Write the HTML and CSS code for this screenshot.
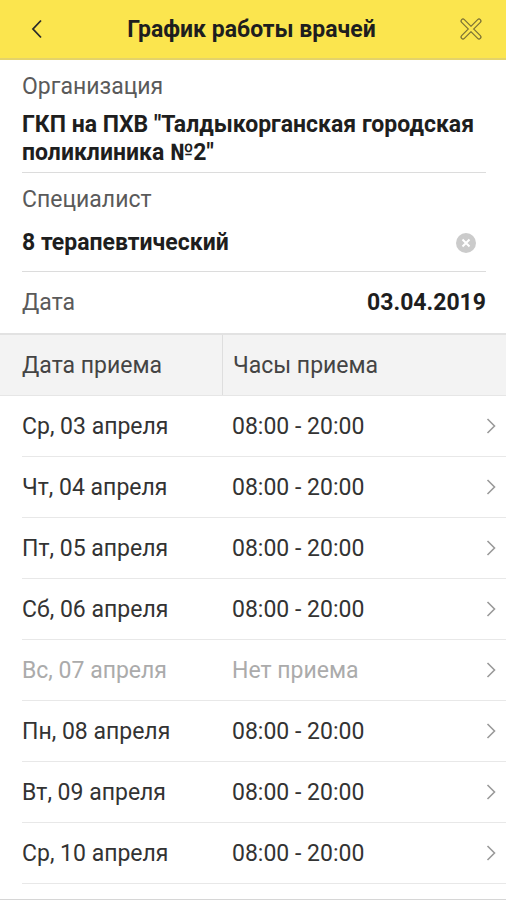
FILE: index.html
```html
<!DOCTYPE html>
<html>
<head>
  <meta charset="UTF-8">
  <title>График работы врачей</title>
  <link rel="stylesheet" href="styles.css">
</head>
<body>

  <div class="topbar">
    <svg class="back" width="12" height="20" viewBox="0 0 12 20">
      <path d="M10 1.5 L2 10 L10 18.5" fill="none" stroke="#2a2a2a" stroke-width="1.8"/>
    </svg>
    <div class="title">График работы врачей</div>
    <svg class="close" width="22" height="22" viewBox="0 0 22 22">
      <path d="M3 3 L19 19 M19 3 L3 19" fill="none" stroke="#7a7035" stroke-width="5" stroke-linecap="round"/>
      <path d="M3 3 L19 19 M19 3 L3 19" fill="none" stroke="#fbe54e" stroke-width="2.6" stroke-linecap="round"/>
    </svg>
  </div>

  <div class="form">
    <div class="field">
      <div class="label">Организация</div>
      <div class="value">ГКП на ПХВ "Талдыкорганская городская поликлиника №2"</div>
    </div>
    <div class="field">
      <div class="label">Специалист</div>
      <div class="value-row">
        <div class="value">8 терапевтический</div>
        <svg class="clear" width="20" height="20" viewBox="0 0 20 20">
          <circle cx="10" cy="10" r="10" fill="#cbcbcb"/>
          <path d="M6.5 6.5 L13.5 13.5 M13.5 6.5 L6.5 13.5" stroke="#fff" stroke-width="2"/>
        </svg>
      </div>
    </div>
    <div class="date-row">
      <div class="label">Дата</div>
      <div class="date-value">03.04.2019</div>
    </div>
  </div>

  <div class="thead">
    <div class="th th-date">Дата приема</div>
    <div class="th th-hours">Часы приема</div>
  </div>

  <div id="rows"></div>
  <div class="bottom"></div>

  <script>
    const days = [
      { day: "Ср, 03 апреля", hours: "08:00 - 20:00" },
      { day: "Чт, 04 апреля", hours: "08:00 - 20:00" },
      { day: "Пт, 05 апреля", hours: "08:00 - 20:00" },
      { day: "Сб, 06 апреля", hours: "08:00 - 20:00" },
      { day: "Вс, 07 апреля", hours: "Нет приема", off: true },
      { day: "Пн, 08 апреля", hours: "08:00 - 20:00" },
      { day: "Вт, 09 апреля", hours: "08:00 - 20:00" },
      { day: "Ср, 10 апреля", hours: "08:00 - 20:00" }
    ];

    const rows = document.getElementById("rows");
    days.forEach(d => {
      const row = document.createElement("div");
      row.className = d.off ? "row off" : "row";
      row.innerHTML = `
        <div class="cell-date">${d.day}</div>
        <div class="cell-hours">${d.hours}</div>
        <svg class="chev" width="10" height="18" viewBox="0 0 10 18">
          <path d="M1.5 2 L8.5 9 L1.5 16" fill="none" stroke="#9a9a9a" stroke-width="1.6"/>
        </svg>
      `;
      rows.appendChild(row);
    });
  </script>

</body>
</html>
```

FILE: styles.css
```css
body { margin: 0; background: #fff; font-family: Roboto, "Noto Sans", sans-serif; color: #222; }

.topbar { height: 58px; background: #fbe54e; border-bottom: 2px solid #e4d36a; display: flex; align-items: center; padding: 0 24px 0 31px; }
.back { flex: none; }
.title { flex: 1; text-align: center; font-size: 23px; font-weight: bold; color: #1e1e1e; }
.close { flex: none; }

.form { padding: 0 20px 0 22px; }
.field { border-bottom: 1px solid #dcdcdc; padding: 13px 0 5px; }
.field + .field { padding-bottom: 10px; }
.label { font-size: 23px; line-height: 28px; color: #5a5a5a; }
.value { font-size: 23px; line-height: 28px; font-weight: bold; color: #1e1e1e; margin-top: 10px; }
.value-row { display: flex; align-items: center; justify-content: space-between; height: 36px; margin-top: 11px; }
.value-row .value { margin-top: 0; }
.clear { margin-right: 10px; }
.date-row { display: flex; align-items: center; justify-content: space-between; height: 61px; }
.date-value { font-size: 23px; font-weight: bold; color: #1e1e1e; }

.thead { display: flex; height: 60px; background: #f3f3f3; border-top: 2px solid #e2e2e2; border-bottom: 1px solid #e6e6e6; }
.th { font-size: 23px; color: #444; display: flex; align-items: center; }
.th-date { width: 200px; padding-left: 22px; border-right: 1px solid #dedede; }
.th-hours { padding-left: 10px; }

.row { display: flex; align-items: center; height: 60px; margin-left: 22px; border-bottom: 1px solid #e8e8e8; font-size: 23px; color: #333; }
.cell-date { width: 210px; }
.cell-hours { flex: 1; }
.chev { margin-right: 10px; }
.row.off { color: #ababab; }

.bottom { margin-top: 15px; border-top: 2px solid #d6d6d6; height: 10px; }
```
